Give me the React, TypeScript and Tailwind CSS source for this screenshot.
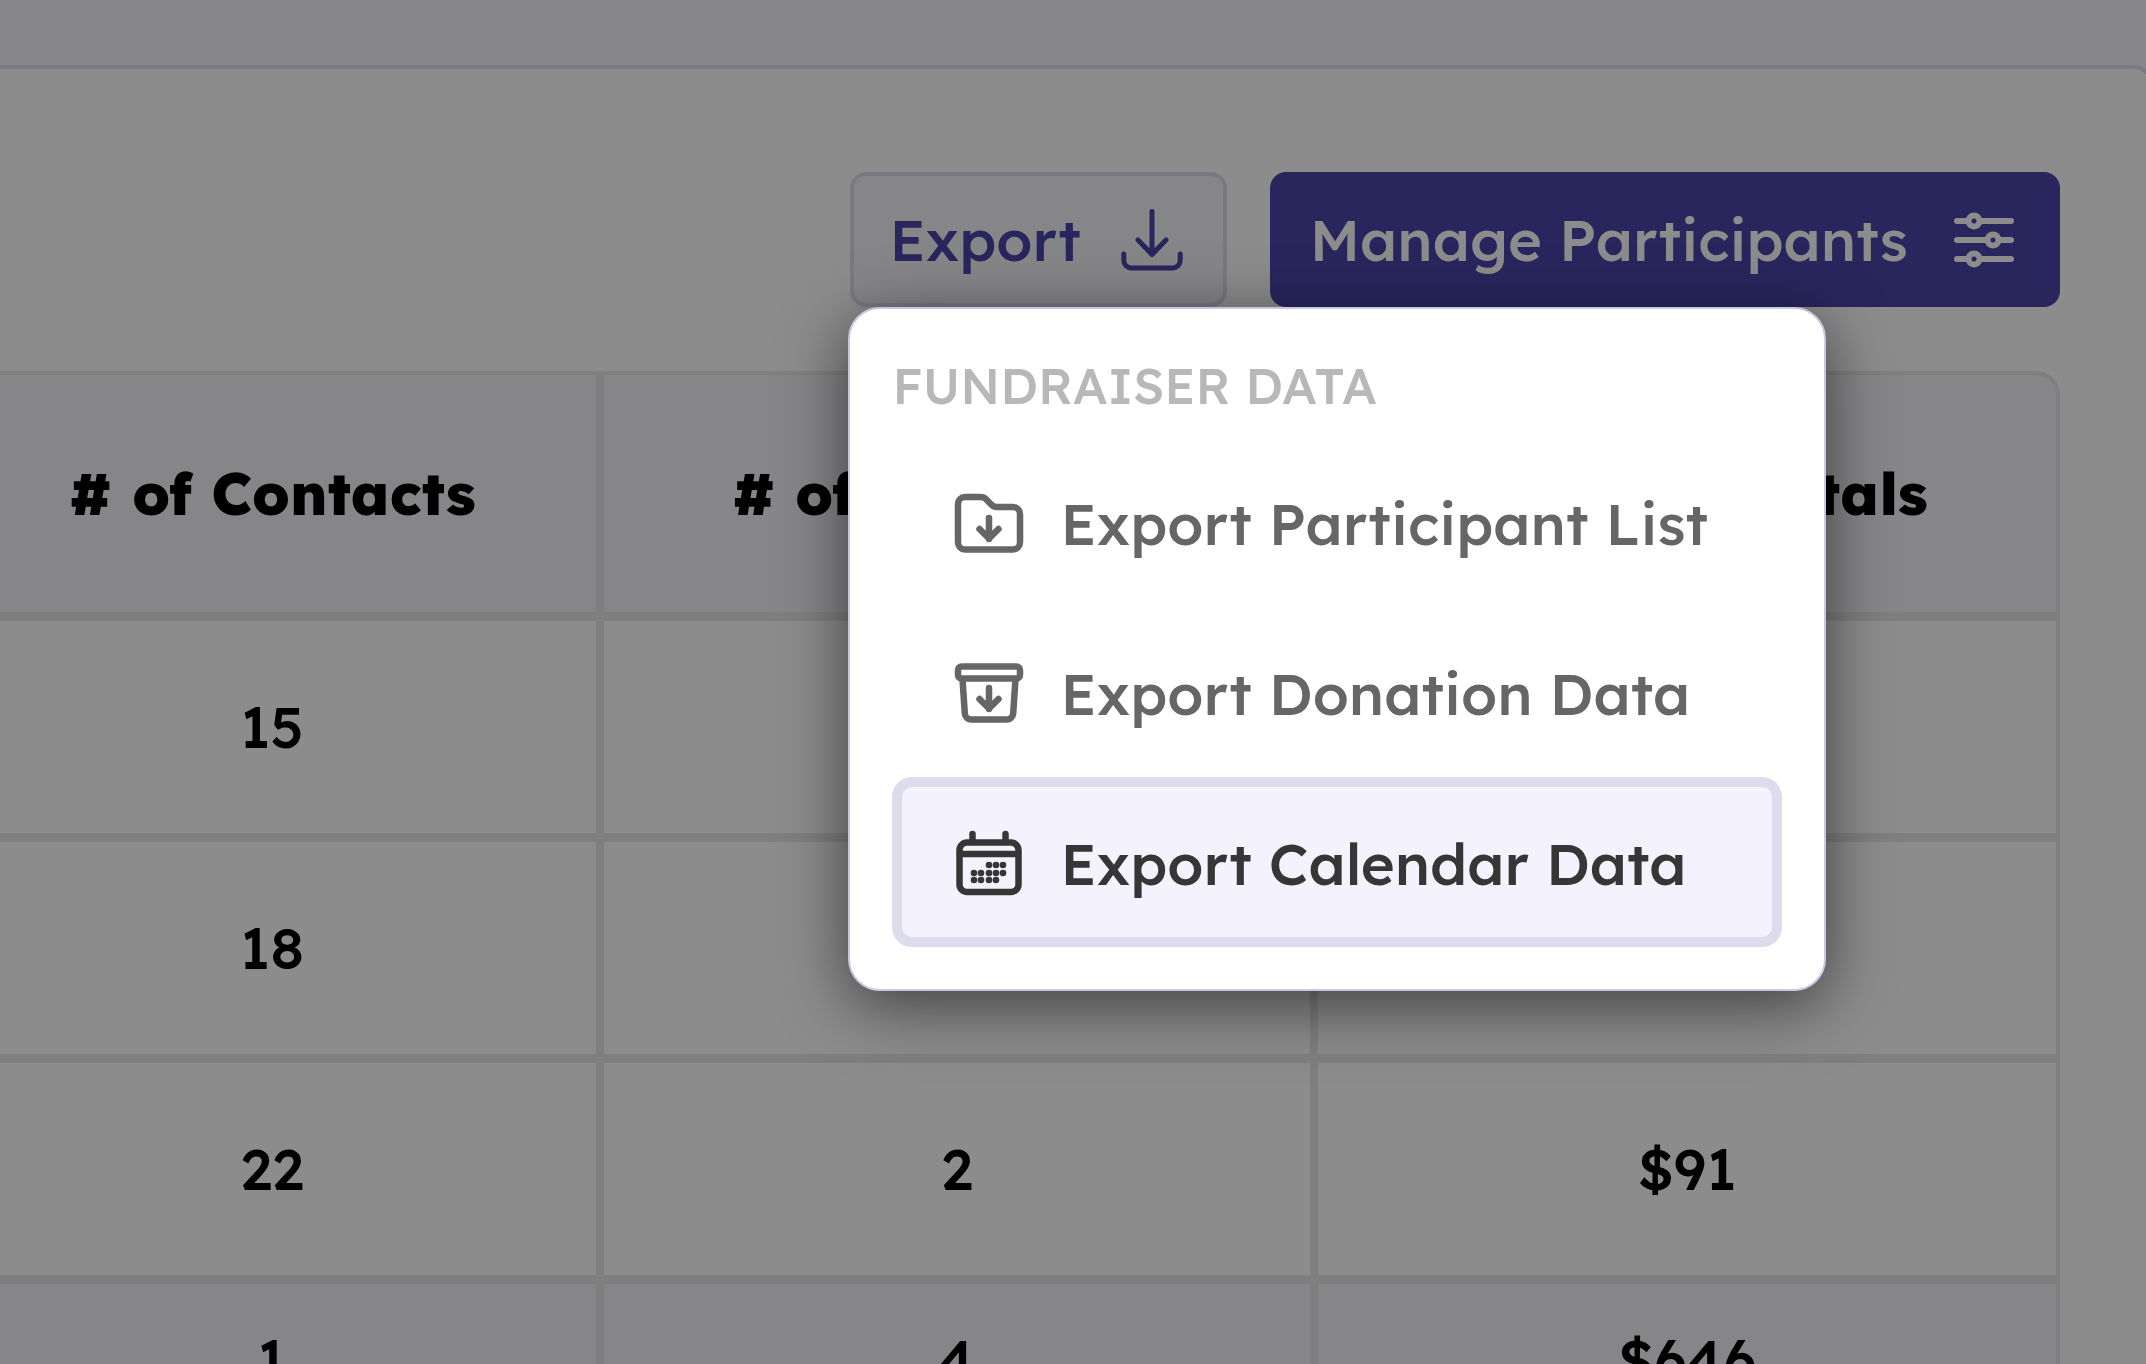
import type { ReactNode } from 'react';

const columns = ['# of Contacts', '# of Donations', 'Donation Totals'];

const rows = [
  ['15', '', ''],
  ['18', '', ''],
  ['22', '2', '$91'],
];

const totals = ['1', '4', '$646'];

const dots = [
  [35, 38], [42, 38], [49, 38],
  [20, 46], [27, 46], [35, 46], [42, 46], [49, 46],
  [20, 53], [27, 53], [35, 53], [42, 53],
];

function DownloadIcon() {
  return (
    <svg className="size-[62px]" viewBox="0 0 62 62" fill="none" stroke="currentColor" strokeWidth="5" strokeLinecap="round" strokeLinejoin="round" aria-hidden="true">
      <path d="M31 2.500V45M17 31l14 14.500L45 31" />
      <path d="M2.800 45v6.500a7.500 7.500 0 0 0 7.500 7.500h41.400a7.500 7.500 0 0 0 7.500-7.500V45" />
    </svg>
  );
}

function SlidersIcon() {
  return (
    <svg className="size-[60px]" viewBox="0 0 60 60" fill="none" stroke="currentColor" strokeWidth="6" strokeLinecap="round" aria-hidden="true">
      <path d="M3 11h11M26 11h31M3 30h30M45 30h12M3 49h11M26 49h31" />
      <circle cx="20" cy="11" r="5.500" />
      <circle cx="39" cy="30" r="5.500" />
      <circle cx="20" cy="49" r="5.500" />
    </svg>
  );
}

function FolderIcon() {
  return (
    <svg className="size-[70px] shrink-0" viewBox="0 0 70 70" fill="none" stroke="currentColor" strokeWidth="6.500" strokeLinecap="round" strokeLinejoin="round" aria-hidden="true">
      <path d="M4 17a7 7 0 0 1 7-7h15.500a8 8 0 0 1 5.600 2.300l5.400 5.400a8 8 0 0 0 5.600 2.300H59a7 7 0 0 1 7 7v28.500a7 7 0 0 1-7 7H11a7 7 0 0 1-7-7z" />
      <path d="M35 31v21M25.500 42l9.500 9.500 9.500-9.500" />
    </svg>
  );
}

function ArchiveIcon() {
  return (
    <svg className="size-[70px] shrink-0" viewBox="0 0 70 70" fill="none" stroke="currentColor" strokeWidth="6.500" strokeLinecap="round" strokeLinejoin="round" aria-hidden="true">
      <rect x="4" y="9.500" width="62" height="12" rx="3.500" />
      <path d="M8.500 22l2.300 34.500a6.500 6.500 0 0 0 6.500 6h35.400a6.500 6.500 0 0 0 6.500-6L61.500 22" />
      <path d="M35 31v21M25.500 42l9.500 9.500 9.500-9.500" />
    </svg>
  );
}

function CalendarIcon() {
  return (
    <svg className="size-[70px] shrink-0" viewBox="0 0 70 70" fill="none" stroke="currentColor" strokeWidth="6.500" strokeLinecap="round" aria-hidden="true">
      <rect x="5.500" y="15.500" width="59" height="49.500" rx="7.500" />
      <path d="M6 27h58M18.500 7v8M51.500 7v8" />
      {dots.map(([x, y]) => (
        <circle key={`${x}-${y}`} cx={x} cy={y} r="3.300" fill="currentColor" stroke="none" />
      ))}
    </svg>
  );
}

function MenuItem({ icon, label, active }: { icon: ReactNode; label: string; active?: boolean }) {
  return (
    <button
      type="button"
      role="menuitem"
      className={
        active
          ? 'flex h-[170px] w-full items-center gap-9 rounded-[20px] border-[10px] border-[#dddced] bg-[#f4f3fd] px-13 text-[#363636]'
          : 'flex h-[170px] w-full items-center gap-9 rounded-[20px] border-[10px] border-transparent px-13 text-[#666666]'
      }
    >
      {icon}
      <span className="whitespace-nowrap pt-1 text-[58px] font-medium leading-none">{label}</span>
    </button>
  );
}

function ExportMenu() {
  return (
    <div
      role="menu"
      aria-label="Fundraiser data"
      className="absolute -left-0.5 top-full z-20 w-[978px] rounded-[32px] border-2 border-[#c9c7e3] bg-white p-[42px] shadow-[0_14px_64px_rgba(0,0,0,0.55)]"
    >
      <p className="mb-4 text-[50px] font-medium leading-[70px] text-[#b8b8b8]">FUNDRAISER DATA</p>
      <MenuItem icon={<FolderIcon />} label="Export Participant List" />
      <MenuItem icon={<ArchiveIcon />} label="Export Donation Data" />
      <MenuItem icon={<CalendarIcon />} label="Export Calendar Data" active />
    </div>
  );
}

function Participants() {
  return (
    <table className="mt-16 w-full table-fixed border-separate border-spacing-0 text-center text-[58px] leading-none text-black">
      <colgroup>
        <col className="w-[656px]" />
        <col className="w-[714px]" />
        <col />
      </colgroup>
      <thead>
        <tr className="h-[246px] bg-[#f4f4f8]">
          {columns.map((column) => (
            <th key={column} scope="col" className="border-4 border-b-5 border-[#e7e7e7] font-extrabold whitespace-nowrap last:rounded-tr-3xl">
              {column}
            </th>
          ))}
        </tr>
      </thead>
      <tbody>
        {rows.map((row) => (
          <tr key={row[0]} className="h-[221px]">
            {row.map((value, i) => (
              <td key={columns[i]} className="border-4 border-b-5 border-[#e7e7e7] font-medium">{value}</td>
            ))}
          </tr>
        ))}
      </tbody>
      <tfoot>
        <tr className="h-[160px] bg-[#f4f4f8]">
          {totals.map((value, i) => (
            <td key={columns[i]} className="border-4 border-[#e7e7e7] font-medium">{value}</td>
          ))}
        </tr>
      </tfoot>
    </table>
  );
}

export default function App() {
  return (
    <div className="h-screen overflow-hidden bg-[#f4f4f8] pt-[65px] font-['Lexend','Inter',sans-serif]">
      <main className="-ml-14 -mr-2 rounded-tr-[20px] border-t-4 border-r-4 border-[#dedef4] bg-white pr-[90px] pt-[103px] pb-24">
        <div className="flex justify-end gap-[43px]">
          <div className="relative">
            <button type="button" aria-haspopup="menu" aria-expanded="true" className="flex h-[135px] items-center gap-10 rounded-2xl border-4 border-[#dedcee] bg-[#f4f4f8] pl-[35px] pr-10 text-[#4945a9]">
              <span className="text-[58px] font-medium leading-none">Export</span>
              <DownloadIcon />
            </button>
            <ExportMenu />
          </div>
          <button type="button" className="flex h-[135px] items-center gap-[46px] rounded-2xl bg-[#4945a9] pl-10 pr-[46px] text-white">
            <span className="text-[58px] font-medium leading-none">Manage Participants</span>
            <SlidersIcon />
          </button>
        </div>
        <Participants />
      </main>
      <div className="fixed inset-0 z-10 bg-black/45" />
    </div>
  );
}
